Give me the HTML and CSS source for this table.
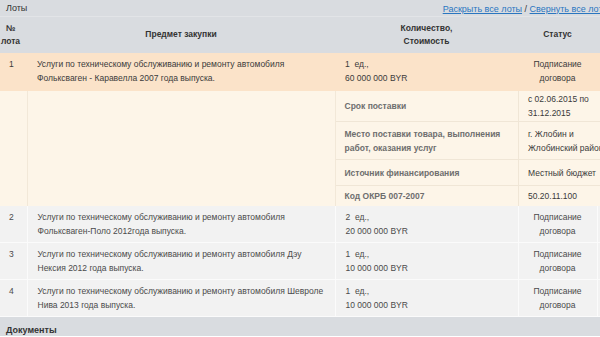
FILE: index.html
```html
<!DOCTYPE html>
<html lang="ru">
<head>
<meta charset="utf-8">
<title>Лоты</title>
<link rel="stylesheet" href="styles.css">
</head>
<body>
<div class="page">
  <div class="bar">
    <span class="bar-title">Лоты</span>
    <span class="bar-links"><a href="#">Раскрыть все лоты</a> / <a href="#">Свернуть все лоты</a></span>
  </div>
  <table class="lots">
    <colgroup>
      <col class="c-num"><col class="c-subj"><col class="c-qty"><col class="c-status"><col class="c-extra">
    </colgroup>
    <thead>
      <tr>
        <th class="th-num">№<br>лота</th>
        <th>Предмет закупки</th>
        <th>Количество,<br>Стоимость</th>
        <th>Статус</th>
        <th></th>
      </tr>
    </thead>
    <tbody>
      <tr class="row-open">
        <td class="num">1</td>
        <td>Услуги по техническому обслуживанию и ремонту автомобиля Фольксваген - Каравелла 2007 года выпуска.</td>
        <td>1&nbsp; ед.,<br>60 000 000 BYR</td>
        <td class="status">Подписание договора</td>
        <td></td>
      </tr>
      <tr class="row-details">
        <td class="d-num"></td>
        <td class="d-empty"></td>
        <td colspan="3" class="d-holder">
          <table class="details">
            <colgroup><col class="dc-label"><col class="dc-value"></colgroup>
            <tr class="dr1"><td class="label">Срок поставки</td><td class="value">с 02.06.2015 по<br>31.12.2015</td></tr>
            <tr class="dr2"><td class="label">Место поставки товара, выполнения<br>работ, оказания услуг</td><td class="value">г. Жлобин и<br>Жлобинский район</td></tr>
            <tr class="dr3"><td class="label">Источник финансирования</td><td class="value">Местный бюджет</td></tr>
            <tr class="dr4"><td class="label">Код ОКРБ 007-2007</td><td class="value">50.20.11.100</td></tr>
          </table>
        </td>
      </tr>
      <tr class="row">
        <td class="num">2</td>
        <td>Услуги по техническому обслуживанию и ремонту автомобиля Фольксваген-Поло 2012года выпуска.</td>
        <td>2&nbsp; ед.,<br>20 000 000 BYR</td>
        <td class="status">Подписание договора</td>
        <td></td>
      </tr>
      <tr class="row">
        <td class="num">3</td>
        <td>Услуги по техническому обслуживанию и ремонту автомобиля Дэу Нексия 2012 года выпуска.</td>
        <td>1&nbsp; ед.,<br>10 000 000 BYR</td>
        <td class="status">Подписание договора</td>
        <td></td>
      </tr>
      <tr class="row">
        <td class="num">4</td>
        <td>Услуги по техническому обслуживанию и ремонту автомобиля Шевроле Нива 2013 года выпуска.</td>
        <td>1&nbsp; ед.,<br>10 000 000 BYR</td>
        <td class="status">Подписание договора</td>
        <td></td>
      </tr>
    </tbody>
  </table>
  <div class="bar bar-docs">
    <span class="bar-title bold">Документы</span>
  </div>
</div>
</body>
</html>
```
FILE: styles.css
```css
html, body {
  margin: 0;
  padding: 0;
  overflow: hidden;
  background: #ffffff;
}
body {
  width: 600px;
  height: 337px;
  font-family: "Liberation Sans", Arial, sans-serif;
  font-size: 8.5px;
  color: #3a3a3a;
}
.page {
  width: 615px;
}
.bar {
  display: flex;
  justify-content: space-between;
  align-items: center;
  height: 17px;
  padding: 0 6px;
  background: #d9dce0;
  border-bottom: 1px solid #e2e4e7;
  box-sizing: border-box;
  font-size: 9px;
}
.bar-title {
  color: #333;
}
.bold {
  font-weight: bold;
}
.bar-links {
  color: #333;
  padding-top: 1px;
}
.bar-links a {
  color: #2a76c0;
  text-decoration: underline;
}
.bar-docs {
  height: 19px;
  border-bottom: none;
  padding-top: 6px;
}
.lots {
  width: 615px;
  border-collapse: collapse;
  table-layout: fixed;
  line-height: 13.5px;
}
.c-num { width: 27px; }
.c-subj { width: 308px; }
.c-qty { width: 183px; }
.c-status { width: 79px; }
.c-extra { width: 18px; }
.lots th {
  background: #d9dce0;
  color: #333;
  font-weight: bold;
  height: 36px;
  padding: 0;
  text-align: center;
  vertical-align: middle;
}
.lots th.th-num {
  padding-right: 6px;
}
.lots td {
  padding: 5px 10px 4px;
  vertical-align: top;
}
.lots td.num {
  padding-left: 9px;
  padding-right: 0;
}
.lots td.status {
  text-align: center;
  padding-left: 4px;
  padding-right: 4px;
}
.row-open td {
  background: #fbe3c9;
  color: #3a3a3a;
  height: 29px;
}
.row td {
  background: #f2f2f2;
  color: #4a4a4a;
  border: 1px solid #fbfbfb;
  border-top: none;
  height: 27px;
}
.row td:first-child {
  border-left: none;
}
.row-details td.d-num,
.row-details td.d-empty {
  background: #fdf5e8;
  border-right: 1px solid #f2e8d8;
  padding: 0;
}
.row-details td.d-holder {
  padding: 0;
  background: #fdf5e8;
}
.details {
  width: 100%;
  border-collapse: collapse;
  table-layout: fixed;
  line-height: 14px;
}
.dc-label { width: 183px; }
.details td {
  padding: 0 10px 0 9px;
  vertical-align: middle;
  border-bottom: 1px solid #f0e6d6;
}
.details td.label {
  color: #6e6e6e;
  font-weight: bold;
  border-right: 1px solid #f0e6d6;
}
.details td.value {
  color: #3a3a3a;
  white-space: nowrap;
  overflow: hidden;
}
.dr1 td { height: 30px; }
.dr2 td { height: 37px; }
.dr3 td { height: 25px; }
.dr4 td { height: 20px; border-bottom: none; }
```
